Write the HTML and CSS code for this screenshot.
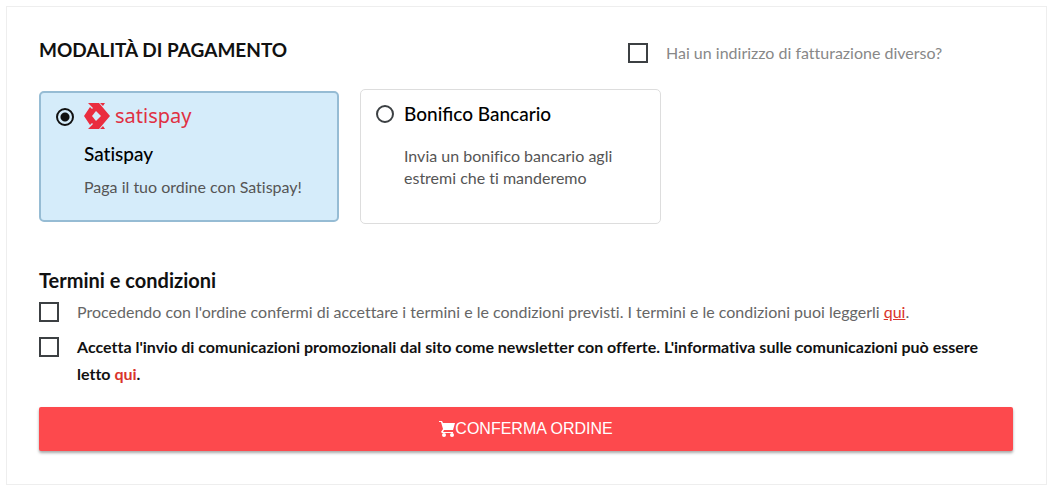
FILE: index.html
```html
<!DOCTYPE html>
<html lang="it">
<head>
    <meta charset="UTF-8">
    <meta name="viewport" content="width=device-width, initial-scale=1.0">
    <title>Pagamento</title>
    <link rel="stylesheet" href="styles.css">
</head>
<body>
    <form class="checkout">
        <div class="checkout-header">
            <h1>MODALITÀ DI PAGAMENTO</h1>
            <label class="billing">
                <input type="checkbox" name="billing">
                <span>Hai un indirizzo di fatturazione diverso?</span>
            </label>
        </div>

        <div class="methods">
            <div class="method selected">
                <input type="radio" name="payment" id="satispay" value="satispay" checked>
                <div class="method-body">
                    <div class="brand">
                        <svg class="brand-icon" viewBox="0 0 26 26" aria-hidden="true">
                            <path d="M4 0h11l11 13-11 13H4l5-5-1-1-2 2-6-9 6-9 2 2 1-1z"/>
                            <path d="M16 0h5l-2 3zM16 26h5l-2-3z"/>
                            <path class="hole" d="M12 8l5 5-5 5-4-5z"/>
                        </svg>
                        <span>satispay</span>
                    </div>
                    <label for="satispay">Satispay</label>
                    <p>Paga il tuo ordine con Satispay!</p>
                </div>
            </div>
            <div class="method">
                <input type="radio" name="payment" id="bonifico" value="bonifico">
                <div class="method-body">
                    <label for="bonifico" class="ligatures">Bonifico Bancario</label>
                    <p>Invia un bonifico bancario agli estremi che ti manderemo</p>
                </div>
            </div>
        </div>

        <h2>Termini e condizioni</h2>
        <div class="term">
            <input type="checkbox" id="terms">
            <label for="terms">Procedendo con l'ordine confermi di accettare i termini e le condizioni previsti. I termini e le condizioni puoi leggerli <a href="#" class="underlined">qui</a>.</label>
        </div>
        <div class="term promo">
            <input type="checkbox" id="promo">
            <label for="promo">Accetta l'invio di comunicazioni promozionali dal sito come newsletter con offerte. L'informativa sulle comunicazioni può essere letto <a href="#">qui</a>.</label>
        </div>

        <button type="button" class="confirm">
            <svg class="cart" viewBox="0 0 16 16" aria-hidden="true">
                <path d="M0 0h3l1 2h12l-2 7H5l-1 2h10v1H3l-1-1 2-3L2 1H0z"/>
                <circle cx="5" cy="14" r="2"/>
                <circle cx="13" cy="14" r="2"/>
            </svg>
            <span>CONFERMA ORDINE</span>
        </button>
    </form>
</body>
</html>
```

FILE: styles.css
```css
* {
    box-sizing: border-box;
}

body {
    margin: 6px 5px 0 6px;
    font-family: Lato, sans-serif;
    font-size: 16px;
    font-variant-ligatures: no-common-ligatures;
    color: #111;
    background-color: #fff;
}

.ligatures {
    font-variant-ligatures: normal;
}

.checkout {
    padding: 30px 33px 33px 32px;
    border: 1px solid #eee;
}

h1,
h2 {
    margin: 0;
    font-size: 20px;
    line-height: 24px;
    font-weight: 700;
}

h1 {
    font-size: 19px;
    line-height: 26px;
}

h2 {
    margin-top: 44px;
    margin-bottom: 10px;
}

.checkout-header {
    display: grid;
    grid-template-columns: 589px 1fr;
}

.billing {
    display: flex;
    align-items: center;
    gap: 18px;
    margin-top: 6px;
    line-height: 20px;
    color: #888;
}

input {
    appearance: none;
    flex: none;
    margin: 0;
    background-color: #fff;
    border: 2px solid #3c4043;
}

input[type="checkbox"] {
    width: 20px;
    height: 20px;
}

input[type="radio"] {
    width: 18px;
    height: 18px;
    border-radius: 50%;
}

input[type="radio"]:checked {
    border-color: #111;
    background: radial-gradient(circle, #111 4px, transparent 5px);
}

.methods {
    display: flex;
    align-items: center;
    gap: 21px;
    margin-top: 26px;
}

.method {
    display: flex;
    gap: 10px;
    width: 301px;
    min-height: 135px;
    padding: 15px;
    border: 1px solid #ddd;
    border-radius: 5px;
}

.method.selected {
    width: 300px;
    min-height: 131px;
    padding: 10px 15px;
    border: 2px solid #96bcd4;
    background-color: #d5ecfa;
}

.method.selected input {
    margin-top: 5px;
}

.method-body label {
    display: block;
    font-size: 19px;
    line-height: 18px;
    font-weight: 500;
    color: #000;
}

.method-body p {
    margin: 22px 0 0;
    line-height: 22px;
    color: #555;
}

.selected .method-body p {
    margin-top: 13px;
}

.brand {
    display: flex;
    align-items: center;
    gap: 5px;
    height: 26px;
    margin-bottom: 16px;
    font-family: "Noto Sans", sans-serif;
    font-size: 20px;
    line-height: 26px;
    color: #e03043;
}

.brand-icon {
    width: 26px;
    height: 26px;
    fill: #ea2d3f;
}

.brand-icon .hole {
    fill: #d5ecfa;
}

.term {
    display: flex;
    align-items: flex-start;
    gap: 18px;
    line-height: 27px;
    color: #666;
}

.term label {
    margin-top: -4px;
}

.promo {
    margin-top: 12px;
    font-weight: 700;
    color: #111;
}

a {
    color: #d9342b;
    text-decoration: none;
}

.underlined {
    text-decoration: underline;
}

.confirm {
    display: flex;
    justify-content: center;
    align-items: center;
    width: 100%;
    height: 44px;
    margin-top: 20px;
    padding: 0;
    border: none;
    border-radius: 2px;
    background-color: #fd494d;
    box-shadow: 0 2px 3px rgba(0, 0, 0, 0.35);
    font-family: "Liberation Sans", sans-serif;
    font-size: 16px;
    color: #fff;
    cursor: pointer;
}

.cart {
    width: 16px;
    height: 16px;
    fill: #fff;
}
```
